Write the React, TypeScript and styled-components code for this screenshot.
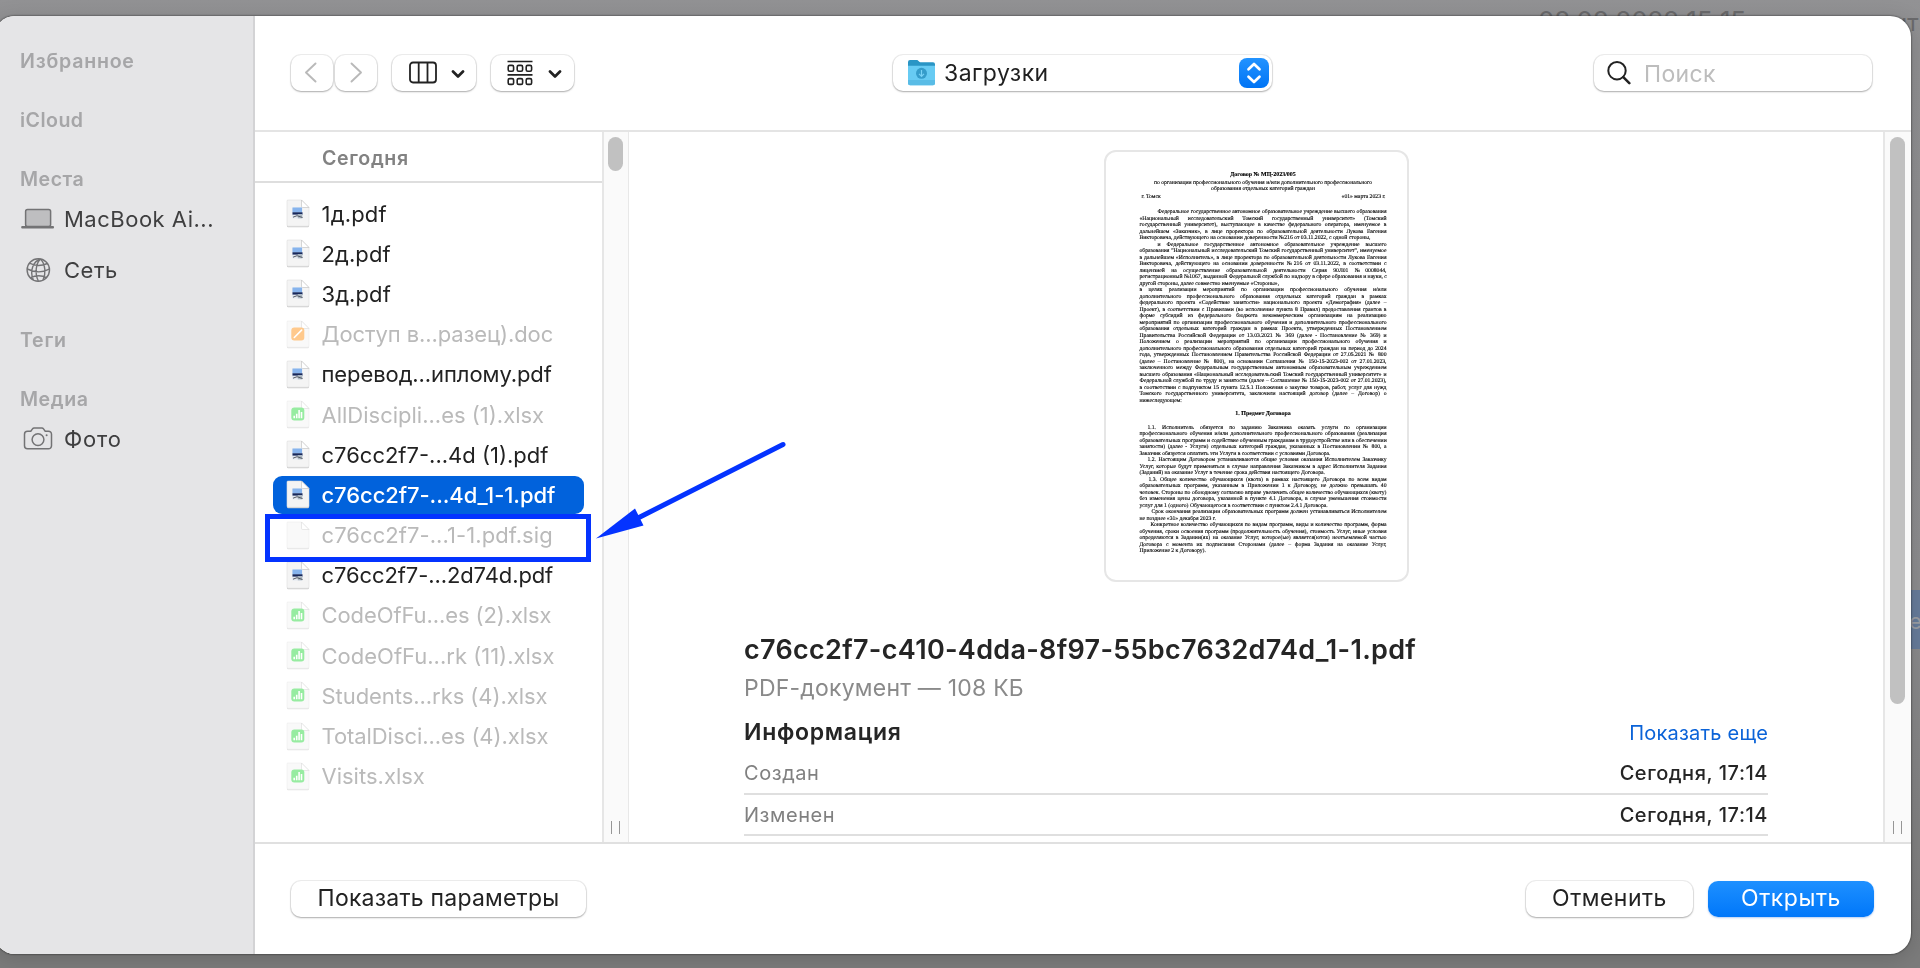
import React from "react";
import styled, { createGlobalStyle, css } from "styled-components";

const GlobalStyle = createGlobalStyle`
  * { box-sizing: border-box; }
  body {
    margin: 0;
    font-family: Inter, "Liberation Sans", sans-serif;
    font-size: 22px;
    color: #252525;
    -webkit-font-smoothing: antialiased;
  }
`;

/* ---------- page behind the dialog ---------- */

const Desktop = styled.div`
  position: relative;
  width: 1920px;
  height: 968px;
  overflow: hidden;
  background: linear-gradient(180deg, #929294 0, #8f8f91 40px, #8c8c8e 600px, #7b7b7b 945px, #7b7b7b 100%);
`;

const BackdropDate = styled.span`
  position: absolute;
  left: 1538px;
  top: 3px;
  font-size: 26px;
  line-height: 36px;
  letter-spacing: -0.1px;
  color: #6a6a6c;
  white-space: nowrap;
`;

const BackdropWord = styled.span`
  position: absolute;
  left: 1893px;
  top: 9px;
  font-size: 24px;
  line-height: 28px;
  color: #6a6a6c;
`;

const BackdropButton = styled.span`
  position: absolute;
  right: 0;
  top: 590px;
  width: 60px;
  height: 59px;
  padding-left: 49px;
  overflow: hidden;
  font-size: 22px;
  line-height: 62px;
  letter-spacing: -3px;
  color: #9a9da3;
  background: #667b9a;
`;

/* ---------- dialog ---------- */

const Dialog = styled.main`
  position: relative;
  display: flex;
  width: 1917px;
  height: 938px;
  margin: 16px 0 0 -6px;
  border-radius: 21px;
  overflow: hidden;
  background: #fff;
`;

const DialogShadow = styled.div`
  display: flow-root;
  filter: drop-shadow(0 0 1px rgba(0, 0, 0, 0.65)) drop-shadow(0 4px 10px rgba(0, 0, 0, 0.14));
`;

const Label = styled.span<{ $spacing?: number }>`
  letter-spacing: ${(p) => p.$spacing ?? 0}px;
  white-space: nowrap;
`;

const Sidebar = styled.nav`
  display: flex;
  flex-direction: column;
  gap: 29px;
  width: 261px;
  flex: none;
  padding: 29.5px 0 0 26px;
  background: #e5e5e7;
  border-right: 2px solid #d3d3d5;
`;

const SideHeading = styled.h2`
  height: 30px;
  margin: 0;
  font-size: 19.6px;
  line-height: 30px;
  font-weight: 600;
  color: #a6a6a8;
`;

const SideItem = styled.div`
  display: flex;
  align-items: center;
  height: 51px;
  color: #3f3f40;
  svg { flex: none; margin-right: 10px; }
`;

const Main = styled.section`
  display: flex;
  flex-direction: column;
  flex: 1;
  min-width: 0;
`;

const Toolbar = styled.header`
  display: flex;
  align-items: center;
  height: 116px;
  padding: 0 39px 0 36px;
  border-bottom: 2px solid #e4e4e4;
`;

const raised = css`
  border-radius: 10px;
  background: #fff;
  box-shadow: 0 0 0 1px rgba(0, 0, 0, 0.07), 0 1px 2px rgba(0, 0, 0, 0.28);
`;

const ToolButton = styled.button<{ $width: number; $gap?: number; $inset?: number }>`
  ${raised}
  display: flex;
  align-items: center;
  justify-content: center;
  width: ${(p) => p.$width}px;
  height: 36px;
  margin: 0 ${(p) => p.$gap ?? 0}px 0 0;
  padding: 0 0 0 ${(p) => p.$inset ?? 0}px;
  border: 0;
`;

const FolderSelect = styled.div`
  ${raised}
  display: flex;
  align-items: center;
  width: 379px;
  height: 36px;
  margin-left: 319px;
  padding: 0 3px 0 15px;
  font-size: 23px;
  color: #1f1f1f;
  svg { flex: none; }
  span { flex: 1; margin-left: 9px; }
`;

const Stepper = styled.div`
  display: flex;
  align-items: center;
  justify-content: center;
  width: 30px;
  height: 30px;
  border-radius: 8px;
  background: linear-gradient(#2293ff, #0074f5);
`;

const Search = styled.div`
  ${raised}
  display: flex;
  align-items: center;
  width: 278px;
  height: 36px;
  margin-left: auto;
  padding-left: 13px;
  font-size: 23px;
  color: #bdbdbd;
  svg { margin-right: 13px; }
  span { padding-top: 2px; }
`;

const Browser = styled.div`
  display: flex;
  height: 710px;
`;

const FileColumn = styled.div`
  width: 347px;
  flex: none;
`;

const GroupHeader = styled.div`
  height: 51px;
  padding: 2px 0 0 67px;
  border-bottom: 2px solid #dedede;
  font-size: 19.6px;
  line-height: 49px;
  font-weight: 600;
  color: #828282;
`;

const FileList = styled.ul`
  position: relative;
  display: grid;
  row-gap: 2.2px;
  margin: 0;
  padding: 11.6px 18px 0;
  list-style: none;
`;

const FileRow = styled.li<{ $dim?: boolean; $selected?: boolean }>`
  display: flex;
  align-items: center;
  height: 38px;
  padding-left: 13px;
  border-radius: 9px;
  color: ${(p) => (p.$selected ? "#fff" : p.$dim ? "#bababa" : "#222")};
  font-weight: ${(p) => (p.$selected ? 500 : 400)};
  background: ${(p) => (p.$selected ? "#0162dc" : "transparent")};
  svg { flex: none; margin-right: 11.5px; opacity: ${(p) => (p.$dim ? 0.55 : 1)}; }
`;

const ScrollTrack = styled.div<{ $width: number }>`
  display: flex;
  flex-direction: column;
  align-items: center;
  justify-content: space-between;
  flex: none;
  width: ${(p) => p.$width}px;
  padding: 5px 1px 8px 0;
  border-left: 2px solid #e6e6e6;
  background: #fafafa;
`;

const Thumb = styled.div<{ $height: number }>`
  width: 15px;
  height: ${(p) => p.$height}px;
  border-radius: 8px;
  background: #c1c1c1;
`;

const Grip = styled.div`
  width: 9px;
  height: 13px;
  border: solid #969696;
  border-width: 0 1.5px;
`;

const Preview = styled.div`
  display: flex;
  flex-direction: column;
  align-items: center;
  flex: 1;
  min-width: 0;
  padding-top: 18px;
  border-left: 1px solid #e8e8e8;
`;

const Paper = styled.article`
  flex: none;
  width: 305px;
  height: 432px;
  padding: 20.4px 20px 0 34px;
  border: 2px solid #e6e6e6;
  border-radius: 12px;
  background: #fff;
  font-family: "Liberation Serif", serif;
  font-size: 5.68px;
  color: #000;
  text-rendering: geometricPrecision;
  -webkit-text-stroke: 0.12px #000;
`;

const PaperLine = styled.div<{ $align?: string; $indent?: number; $bold?: boolean; $before?: number }>`
  height: 6.52px;
  margin-top: ${(p) => p.$before ?? 0}px;
  line-height: 6.52px;
  white-space: nowrap;
  text-align: ${(p) => p.$align ?? "justify"};
  text-align-last: ${(p) => p.$align ?? "justify"};
  text-indent: ${(p) => p.$indent ?? 0}px;
  font-weight: ${(p) => (p.$bold ? 700 : 400)};
  font-size: ${(p) => (p.$bold ? 5.95 : 5.68)}px;
`;

const PaperSplit = styled.div`
  display: flex;
  justify-content: space-between;
  height: 6.52px;
  margin: 1.4px 1px 0 2px;
  line-height: 6.52px;
`;

const Details = styled.div`
  width: 1024px;
  margin-top: 48px;
`;

const FileTitle = styled.h1`
  margin: 0;
  font-size: 27px;
  line-height: 40px;
  font-weight: 600;
  color: #252525;
`;

const FileKind = styled.p`
  margin: 0;
  font-size: 23px;
  line-height: 36px;
  color: #8a8a8a;
`;

const InfoHeading = styled.div`
  display: flex;
  align-items: center;
  justify-content: space-between;
  height: 47px;
  padding-top: 4px;
  font-size: 23px;
  font-weight: 600;
  color: #252525;
`;

const MoreLink = styled.a`
  padding-top: 2px;
  font-size: 20px;
  font-weight: 400;
  color: #0b63d8;
`;

const InfoRow = styled.div`
  display: flex;
  align-items: center;
  justify-content: space-between;
  height: 41.7px;
  padding-top: 1px;
  border-bottom: 2px solid #dfdfdf;
  font-size: 20px;
  color: #808080;
  strong { font-weight: 500; color: #252525; }
`;

const Footer = styled.footer`
  display: flex;
  align-items: center;
  flex: 1;
  padding: 0 37px 1px 36px;
  border-top: 2px solid #e0e0e0;
`;

const PushButton = styled.button<{ $width: number; $primary?: boolean }>`
  ${raised}
  width: ${(p) => p.$width}px;
  height: 36px;
  padding: 0;
  border: 0;
  font: 400 23px/35px Inter, "Liberation Sans", sans-serif;
  color: #222;
  ${(p) =>
    p.$primary &&
    css`
      color: #fff;
      background: linear-gradient(#1e90ff, #0077fa);
      box-shadow: 0 1px 2px rgba(0, 90, 220, 0.3);
    `}
`;

const Actions = styled.div`
  display: flex;
  gap: 15px;
  margin-left: auto;
`;

/* marker and arrow lie over the file list */
const Marker = styled.div`
  position: absolute;
  left: 10px;
  top: 331px;
  width: 326px;
  height: 48px;
  border: 5px solid #0433ff;
`;

const Arrow = styled.svg`
  position: absolute;
  left: 600px;
  top: 422px;
`;

/* ---------- icons ---------- */

const LaptopIcon = () => (
  <svg width="34" height="24" viewBox="0 0 34 24" fill="none">
    <rect x="5.6" y="2.6" width="25" height="17" rx="2" fill="#bebec0" stroke="#737375" strokeWidth="1.5" />
    <rect x="1.2" y="19" width="32.800" height="2.4" rx="1" fill="#737375" />
  </svg>
);

const GlobeIcon = () => (
  <svg width="34" height="26" viewBox="-1 0 34 26" fill="none" stroke="#737375" strokeWidth="1.4">
    <circle cx="17.3" cy="13" r="11.2" />
    <path d="M8.5 6.2c5 2.6 12 3 17.8.3M6.3 12c7 3.4 15.500 3.500 22 .2M9.200 20.800c5-2.400 12-2.300 16.800-.3M19.500 2c-4.500 4-6 14.500-2.200 22M19.500 2c5.200 5.500 5.500 15 2.500 21M19.500 2C12 4.500 8.500 14 12.200 22.800" />
  </svg>
);

const CameraIcon = () => (
  <svg width="34" height="26" viewBox="-1 0 34 26" fill="none" stroke="#737375" strokeWidth="1.5">
    <path d="M3.500 8.200a3 3 0 0 1 3-3h3.300l1.700-2.300a2 2 0 0 1 1.600-.8h7.800a2 2 0 0 1 1.600.8l1.700 2.300h3.300a3 3 0 0 1 3 3v11.600a3 3 0 0 1-3 3h-21a3 3 0 0 1-3-3z" />
    <circle cx="17" cy="13.600" r="5.900" />
    <circle cx="25.600" cy="9.200" r="1" fill="#737375" stroke="none" />
  </svg>
);

const ArrowChevron = ({ back }: { back?: boolean }) => (
  <svg width="14" height="22" viewBox="1 0 14 22" fill="none" stroke="#b9b9b9" strokeWidth="1.9" strokeLinecap="round" strokeLinejoin="round">
    <path d={back ? "M11.500 1.500L2 10.500l9.500 9" : "M3.500 1.500l9.500 9-9.500 9"} />
  </svg>
);

const ChevronDown = () => (
  <svg width="14" height="9" viewBox="0 -.5 14 9" fill="none" stroke="#222" strokeWidth="2.700" strokeLinecap="round" strokeLinejoin="round">
    <path d="M2 2l5 5 5-5" />
  </svg>
);

const ColumnsIcon = () => (
  <svg width="42" height="24" viewBox="0 0 42 24" fill="none" stroke="#222" strokeWidth="1.800">
    <rect x="1" y="1.500" width="26" height="20" rx="3" />
    <path d="M9.700 2v19M18.500 2v19" />
  </svg>
);

const GroupIcon = () => (
  <svg width="41" height="26" viewBox="0 0 41 26" fill="none" stroke="#222" strokeWidth="1.600">
    <path d="M.5 1.500h25M.5 14.800h25" strokeWidth="1.700" />
    {[5.4, 18.6].map((y) =>
      [1.2, 10.2, 19.2].map((x) => <rect key={`${x}-${y}`} x={x} y={y} width="5.400" height="5.800" rx="1.500" />)
    )}
  </svg>
);

const FolderIcon = () => (
  <svg width="27" height="26" viewBox="0 0 27 26">
    <path d="M0 2a2 2 0 0 1 2-2h6.500c1 0 1.500.4 2.300 1.300.7.700 1.200 1 2.200 1h12a2 2 0 0 1 2 2V10H0z" fill="#2a95c5" />
    <path d="M0 5.700h27v17.500a2 2 0 0 1-2 2H2a2 2 0 0 1-2-2z" fill="#67cbf3" />
    <path d="M0 20h27v3.200a2 2 0 0 1-2 2H2a2 2 0 0 1-2-2z" fill="#59bce6" />
    <circle cx="13.500" cy="13.300" r="5.500" fill="#359cca" />
    <path d="M13.500 10v6M11 13.800l2.500 2.500 2.500-2.500" stroke="#79d2f6" strokeWidth="1.200" fill="none" />
  </svg>
);

const StepperIcon = () => (
  <svg width="16" height="22" viewBox="0 0 16 22" fill="none" stroke="#fff" strokeWidth="2.700" strokeLinecap="round" strokeLinejoin="round">
    <path d="M2.500 7.200L8 2l5.500 5.200M2.500 14.800L8 20l5.500-5.200" />
  </svg>
);

const SearchIcon = () => (
  <svg width="24" height="24" viewBox="0 0 24 24" fill="none" stroke="#222" strokeLinecap="round">
    <circle cx="10" cy="9.700" r="8.700" strokeWidth="2" />
    <path d="M16.300 16.200l6 6" strokeWidth="2.600" />
  </svg>
);

type Kind = "pdf" | "doc" | "xlsx" | "blank";

const FileIcon = ({ kind }: { kind: Kind }) => (
  <svg width="24" height="29" viewBox="-1 -1 24 29">
    <path d="M1.500.8h13L22 8.500V26a1.200 1.200 0 0 1-1.200 1.200H1.200A1.200 1.200 0 0 1 0 26V2A1.200 1.200 0 0 1 1.500.8z" fill="#c9c9c9" />
    <path d="M1.500 0h13L22 7.500V25a1.200 1.200 0 0 1-1.200 1.200H1.200A1.200 1.200 0 0 1 0 25V1.200A1.200 1.200 0 0 1 1.500 0z" fill="#f4f4f4" stroke="#dedede" strokeWidth=".6" />
    <path d="M14.500 0v6.300c0 .8.400 1.200 1.200 1.200H22z" fill="#fff" stroke="#c4c4c4" strokeWidth=".7" />
    {kind === "pdf" && (
      <g>
        <rect x="5" y="7.500" width="10.500" height="11" rx="1" fill="#e4e9f1" />
        <path d="M5.500 7.500h9.500v5H5.500z" fill="#87b4ed" />
        <path d="M5.500 12.300h10v2.300h-10z" fill="#17275a" />
        <path d="M10.800 14h4.500v4.300h-4.500z" fill="#aab6c1" />
        <path d="M6 17.200l4-1.500 5.500 1.800" stroke="#565c66" strokeWidth="1" fill="none" />
      </g>
    )}
    {kind === "doc" && (
      <g>
        <rect x="4.300" y="6.500" width="13" height="13" rx="3" fill="#ff9d2e" />
        <path d="M7.300 16.500l7.300-7.400" stroke="#fff" strokeWidth="1.600" strokeLinecap="round" />
      </g>
    )}
    {kind === "xlsx" && (
      <g>
        <rect x="4.300" y="6.500" width="13" height="13" rx="3" fill="#43dc55" />
        <path d="M7.200 17.300v-2.500M9.700 17.300v-4.600M12.100 17.300V9M14.500 17.300v-6.200" stroke="#fff" strokeWidth="1.600" />
      </g>
    )}
  </svg>
);

/* ---------- data ---------- */

const files: { name: string; kind: Kind; spacing: number; dim?: boolean; selected?: boolean }[] = [
  { name: "1д.pdf", kind: "pdf", spacing: 0.2 },
  { name: "2д.pdf", kind: "pdf", spacing: 0.1 },
  { name: "3д.pdf", kind: "pdf", spacing: 0.1 },
  { name: "Доступ в...разец).doc", kind: "doc", spacing: -0.1, dim: true },
  { name: "перевод...иплому.pdf", kind: "pdf", spacing: -0.09 },
  { name: "AllDiscipli...es (1).xlsx", kind: "xlsx", spacing: 0, dim: true },
  { name: "c76cc2f7-...4d (1).pdf", kind: "pdf", spacing: 0 },
  { name: "c76cc2f7-...4d_1-1.pdf", kind: "pdf", spacing: -0.08, selected: true },
  { name: "c76cc2f7-...1-1.pdf.sig", kind: "blank", spacing: 0.07, dim: true },
  { name: "c76cc2f7-...2d74d.pdf", kind: "pdf", spacing: -0.1 },
  { name: "CodeOfFu...es (2).xlsx", kind: "xlsx", spacing: -0.1, dim: true },
  { name: "CodeOfFu...rk (11).xlsx", kind: "xlsx", spacing: 0, dim: true },
  { name: "Students...rks (4).xlsx", kind: "xlsx", spacing: -0.06, dim: true },
  { name: "TotalDisci...es (4).xlsx", kind: "xlsx", spacing: -0.07, dim: true },
  { name: "Visits.xlsx", kind: "xlsx", spacing: 0, dim: true },
];

type DocLine = { text: string; indent?: number; left?: boolean };

const preamble: DocLine[] = [
  { text: "Федеральное государственное автономное образовательное учреждение высшего образования", indent: 18 },
  { text: "«Национальный исследовательский Томский государственный университет» (Томский" },
  { text: "государственный университет), выступающее в качестве федерального оператора, именуемое в" },
  { text: "дальнейшем «Заказчик», в лице проректора по образовательной деятельности Лукова Евгения" },
  { text: "Викторовича, действующего на основании доверенности №216 от 03.11.2022, с одной стороны,", left: true },
  { text: "и Федеральное государственное автономное образовательное учреждение высшего", indent: 18 },
  { text: "образования \"Национальный исследовательский Томский государственный университет\", именуемое" },
  { text: "в дальнейшем «Исполнитель», в лице проректора по образовательной деятельности Лукова Евгения" },
  { text: "Викторовича, действующего на основании доверенности №216 от 03.11.2022, в соответствии с" },
  { text: "лицензией на осуществление образовательной деятельности Серия 90Л01 №0008044," },
  { text: "регистрационный №1067, выданной Федеральной службой по надзору в сфере образования и науки, с" },
  { text: "другой стороны, далее совместно именуемые «Стороны»,", left: true },
  { text: "в целях реализации мероприятий по организации профессионального обучения и/или" },
  { text: "дополнительного профессионального образования отдельных категорий граждан в рамках" },
  { text: "федерального проекта «Содействие занятости» национального проекта «Демография» (далее –" },
  { text: "Проект), в соответствии с  Правилами (во исполнение пункта 8 Правил) предоставления грантов в" },
  { text: "форме субсидий из федерального бюджета некоммерческим организациям на реализацию" },
  { text: "мероприятий по организации профессионального обучения и дополнительного профессионального" },
  { text: "образования отдельных категорий граждан в рамках Проекта, утвержденных Постановлением" },
  { text: "Правительства Российской Федерации от 13.03.2021 № 369 (далее - Постановление № 369) и" },
  { text: "Положением о реализации мероприятий по организации профессионального обучения и" },
  { text: "дополнительного профессионального образования отдельных категорий граждан на период до 2024" },
  { text: "года, утвержденных Постановлением Правительства Российской Федерации от 27.05.2021 № 800" },
  { text: "(далее – Постановление № 800), на основании  Соглашения № 150-15-2023-002 от 27.01.2023," },
  { text: "заключенного между Федеральным государственным автономным образовательным учреждением" },
  { text: "высшего образования «Национальный исследовательский Томский государственный университет» и" },
  { text: "Федеральной службой по труду и занятости  (далее – Соглашение № 150-15-2023-002 от 27.01.2023)," },
  { text: "в соответствии с подпунктом 15 пункта 12.5.1  Положения о закупке товаров, работ, услуг для нужд" },
  { text: "Томского государственного университета, заключили настоящий договор (далее – Договор) о" },
  { text: "нижеследующем:", left: true },
];

const subject: DocLine[] = [
  { text: "1.1. Исполнитель обязуется по заданию Заказчика оказать услуги по организации", indent: 8 },
  { text: "профессионального обучения и/или дополнительного профессионального образования  (реализация" },
  { text: "образовательных программ и содействие обученным гражданам в трудоустройстве или в обеспечении" },
  { text: "занятости) (далее - Услуги) отдельных категорий граждан, указанных в Постановлении № 800, а" },
  { text: "Заказчик обязуется оплатить эти Услуги в соответствии с условиями Договора.", left: true },
  { text: "1.2. Настоящим Договором устанавливаются общие условия оказания Исполнителем Заказчику", indent: 8 },
  { text: "Услуг, которые будут применяться в случае направления Заказчиком в адрес Исполнителя Задания" },
  { text: "(Заданий)  на оказание Услуг в течение срока действия настоящего Договора.", left: true },
  { text: "1.3. Общее количество обучающихся (квота) в рамках настоящего Договора  по всем видам", indent: 9 },
  { text: "образовательных программ, указанным в Приложении 1 к Договору, не должно превышать 40" },
  { text: "человек. Стороны по обоюдному согласию вправе увеличить общее количество обучающихся (квоту)" },
  { text: "без изменения цены договора, указанной в пункте 4.1 Договора, в случае уменьшения стоимости" },
  { text: "услуг для 1 (одного) Обучающегося в соответствии с пунктом 2.4.1 Договора.", left: true },
  { text: "Срок окончания реализации образовательных программ должен устанавливаться Исполнителем", indent: 12 },
  { text: "не позднее «31» декабря 2023 г.", left: true },
  { text: "Конкретное количество обучающихся по видам программ, виды и количество программ, форма", indent: 11 },
  { text: "обучения, сроки освоения программ (продолжительность обучения), стоимость Услуг, иные условия" },
  { text: "определяются в Задании(ях) на оказание Услуг, которое(ые) является(ются) неотъемлемой частью" },
  { text: "Договора с момента их подписания Сторонами (далее –  форма Задания на оказание Услуг," },
  { text: "Приложение 2 к Договору).", left: true },
];

const renderLines = (lines: DocLine[], before: number) =>
  lines.map((l, i) => (
    <PaperLine key={i} $indent={l.indent} $align={l.left ? "left" : undefined} $before={i === 0 ? before : 0}>
      {l.text}
    </PaperLine>
  ));

export default function App() {
  return (
    <Desktop>
      <GlobalStyle />
      <BackdropDate>08.08.2022 15:15</BackdropDate>
      <BackdropWord>ит</BackdropWord>
      <BackdropButton>е</BackdropButton>
      <DialogShadow>
        <Dialog>
          <Sidebar>
            <SideHeading><Label $spacing={0.75}>Избранное</Label></SideHeading>
            <SideHeading><Label $spacing={0.45}>iCloud</Label></SideHeading>
            <div>
              <SideHeading><Label $spacing={0.5}>Места</Label></SideHeading>
              <SideItem><LaptopIcon /><Label $spacing={0.5}>MacBook Ai...</Label></SideItem>
              <SideItem><GlobeIcon /><Label $spacing={0.5}>Сеть</Label></SideItem>
            </div>
            <SideHeading><Label $spacing={0.7}>Теги</Label></SideHeading>
            <div>
              <SideHeading><Label $spacing={0.55}>Медиа</Label></SideHeading>
              <SideItem><CameraIcon /><Label $spacing={0.8}>Фото</Label></SideItem>
            </div>
          </Sidebar>
          <Main>
            <Toolbar>
              <ToolButton $width={42} $gap={2}><ArrowChevron back /></ToolButton>
              <ToolButton $width={42} $gap={15}><ArrowChevron /></ToolButton>
              <ToolButton $width={84} $gap={15} $inset={5}><ColumnsIcon /><ChevronDown /></ToolButton>
              <ToolButton $width={83} $inset={4}><GroupIcon /><ChevronDown /></ToolButton>
              <FolderSelect>
                <FolderIcon />
                <Label $spacing={0.45}>Загрузки</Label>
                <Stepper><StepperIcon /></Stepper>
              </FolderSelect>
              <Search><SearchIcon /><Label $spacing={0.35}>Поиск</Label></Search>
            </Toolbar>
            <Browser>
              <FileColumn>
                <GroupHeader><Label $spacing={0.65}>Сегодня</Label></GroupHeader>
                <FileList>
                  {files.map((f) => (
                    <FileRow key={f.name} $dim={f.dim} $selected={f.selected}>
                      <FileIcon kind={f.kind} />
                      <Label $spacing={f.spacing}>{f.name}</Label>
                    </FileRow>
                  ))}
                  <Marker />
                </FileList>
              </FileColumn>
              <ScrollTrack $width={26}><Thumb $height={34} /><Grip /></ScrollTrack>
              <Preview>
                <Paper>
                  <PaperLine $align="center" $bold>Договор № МЦ-2023/005</PaperLine>
                  <PaperLine $align="center" $before={0.9}>по организации профессионального обучения и/или дополнительного профессионального</PaperLine>
                  <PaperLine $align="center">образования отдельных категорий граждан</PaperLine>
                  <PaperSplit><span>г. Томск</span><span>«01» марта 2023 г.</span></PaperSplit>
                  {renderLines(preamble, 8.3)}
                  <PaperLine $align="center" $bold $before={6.5}>1. Предмет Договора</PaperLine>
                  {renderLines(subject, 7.1)}
                </Paper>
                <Details>
                  <FileTitle><Label $spacing={0.3}>c76cc2f7-c410-4dda-8f97-55bc7632d74d_1-1.pdf</Label></FileTitle>
                  <FileKind><Label $spacing={0.22}>PDF-документ — 108 КБ</Label></FileKind>
                  <InfoHeading>
                    <Label $spacing={0.7}>Информация</Label>
                    <MoreLink><Label $spacing={0.2}>Показать еще</Label></MoreLink>
                  </InfoHeading>
                  <InfoRow><Label $spacing={0.55}>Создан</Label><strong><Label $spacing={0.54}>Сегодня, 17:14</Label></strong></InfoRow>
                  <InfoRow><Label $spacing={0.55}>Изменен</Label><strong><Label $spacing={0.54}>Сегодня, 17:14</Label></strong></InfoRow>
                </Details>
              </Preview>
              <ScrollTrack $width={28}><Thumb $height={567} /><Grip /></ScrollTrack>
            </Browser>
            <Footer>
              <PushButton $width={295}><Label $spacing={0.22}>Показать параметры</Label></PushButton>
              <Actions>
                <PushButton $width={167}><Label $spacing={0.5}>Отменить</Label></PushButton>
                <PushButton $width={166} $primary><Label $spacing={0.55}>Открыть</Label></PushButton>
              </Actions>
            </Footer>
          </Main>
          <Arrow width="192" height="110" viewBox="594 438 192 110">
            <path d="M783 444.500L638 518" stroke="#0433ff" strokeWidth="5" strokeLinecap="round" />
            <path d="M596 538.500l39-30 8.500 17z" fill="#0433ff" />
          </Arrow>
        </Dialog>
      </DialogShadow>
    </Desktop>
  );
}
